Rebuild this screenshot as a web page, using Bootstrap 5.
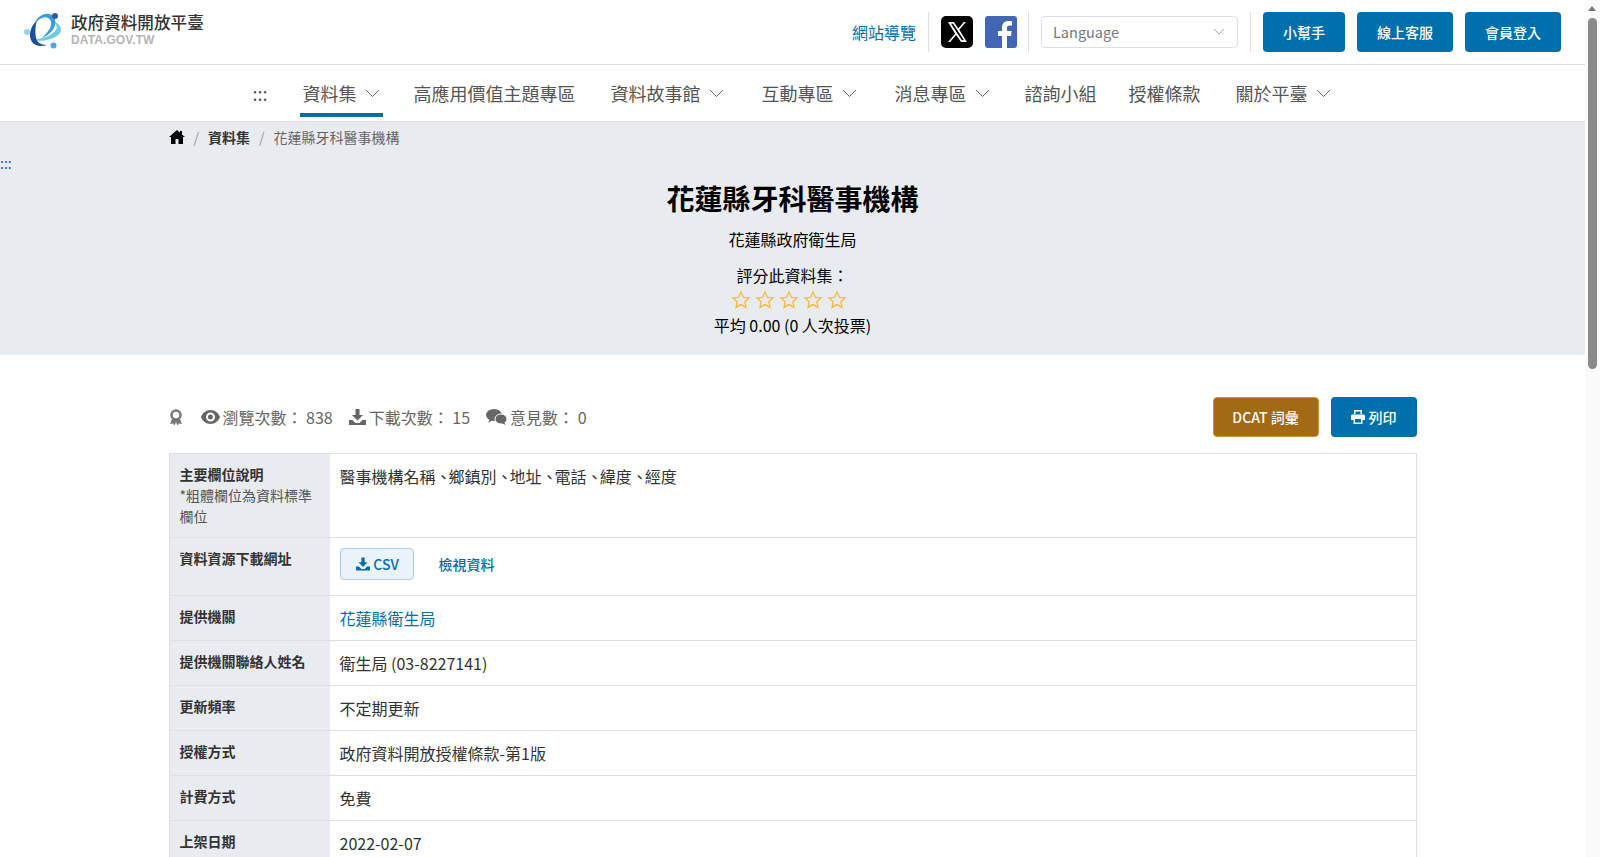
<!DOCTYPE html>
<html lang="zh-Hant">
<head>
  <meta charset="UTF-8" />
  <meta name="viewport" content="width=device-width, initial-scale=1.0"/>
  <title>花蓮縣牙科醫事機構</title>
  <link href="https://cdn.jsdelivr.net/npm/bootstrap@5.3.0/dist/css/bootstrap.min.css" rel="stylesheet">
  <style>
    html { overflow-x: hidden; }
    body {
      font-family: "Noto Sans CJK TC", "Noto Sans", sans-serif;
      font-size: 16px;
      color: #333;
      background: #fff;
      padding-right: 15px;
    }
    .fake-track { position: fixed; top: 0; right: 0; bottom: 0; width: 15px; background: #fafafa; }
    .fake-arrow { position: absolute; top: 6px; left: 3px; border: 4.5px solid transparent; border-top: 0; border-bottom: 5px solid #777; }
    .fake-thumb { position: absolute; top: 18px; left: 3px; width: 9px; height: 351px; background: #8a8a8a; border-radius: 5px; }
    .topbar { height: 65px; border-bottom: 1px solid #dcdfe8; padding: 12px 24px 0 23px; }
    .logo-text { margin-left: 6px; }
    .logo-name { font-size: 16.6px; line-height: 20px; color: #333; font-weight: 500; }
    .logo-sub { font-family: "Liberation Sans", sans-serif; font-size: 12px; line-height: 12px; font-weight: 700; color: #b5b5b5; letter-spacing: .1px; margin-top: 2px; }
    .top-tools { gap: 12px; height: 40px; }
    .sitemap-link { color: #0070ad; text-decoration: none; font-size: 16px; }
    .vline { width: 1px; height: 40px; background: #dcdfe8; }
    .fb-logo { margin-right: -1px; }
    .lang-pick { width: 197px; height: 32px; border: 1px solid #dcdfe8; border-radius: 4px; color: #777; font-size: 14.5px; padding: 0 12px 0 11px; }
    .blue-btn { background: #0070ad; color: #fff; border: 0; border-radius: 4px; font-size: 14px; height: 40px; font-weight: 500; }
    .blue-btn:hover { background: #005f93; color: #fff; }
    .mainnav { height: 57px; border-bottom: 1px solid #dcdfe8; padding-right: 2px; }
    .mainnav a { color: #555; text-decoration: none; font-size: 18px; height: 52px; padding-top: 8px; border-bottom: 4px solid transparent; display: flex; align-items: center; gap: 8px; white-space: nowrap; }
    .mainnav a.on { border-bottom-color: #0070ad; padding-left: 3px; padding-right: 3px; }
    .hero { background: #e8ebf0; height: 233px; position: relative; color: #000; }
    .crumbs { width: 1248px; margin: 0 auto; height: 31px; font-size: 14px; color: #666; padding-bottom: 1px; gap: 9px; }
    .crumbs b { color: #333; }
    .crumbs i { font-style: normal; color: #999; }
    .skip-mark { position: absolute; left: 0; top: 31px; color: #0070ad; font-size: 14px; line-height: 20px; }
    .hero h1 { font-size: 28px; font-weight: 700; line-height: 40px; margin: 0; padding-top: 25px; color: #000; }
    .hero-org { font-size: 16px; line-height: 24px; margin-top: 9px; }
    .hero-rate { font-size: 16px; line-height: 24px; margin-top: 12px; }
    .stars { height: 24px; gap: 4px; margin-top: 1px; margin-bottom: 1px; padding-right: 8px; }
    .hero-avg { font-size: 16px; line-height: 24px; }
    .page-wrap { width: 1248px; margin: 0 auto; padding-bottom: 40px; }
    .stat-row { padding-top: 42px; height: 98px; color: #666; font-size: 16px; }
    .stat-list { height: 40px; gap: 16px; }
    .stat-award { margin-right: 2px; }
    .stat-item { gap: 3px; }
    .gold-btn { background: #a26a15; border: 1px solid #d9952f; color: #fff; border-radius: 4px; height: 40px; width: 106px; font-size: 14px; font-weight: 500; }
    .gold-btn:hover { background: #8d5c12; color: #fff; }
    .info-tbl { border: 1px solid #dcdfe8; width: 100%; }
    .info-line { display: flex; border-bottom: 1px solid #dcdfe8; }
    .info-head { width: 160px; flex: none; background: #e8ebf0; padding: 10px; font-size: 14px; line-height: 21px; color: #555; }
    .info-head b { font-weight: 700; color: #333; }
    .info-val { padding: 10px; font-size: 16px; line-height: 24px; flex: 1; color: #333; }
    .info-val a { color: #0070ad; text-decoration: none; }
    .dun { letter-spacing: -3px; }
    .csv-btn { background: #eaf3fb; border: 1px solid #a9cdea; border-radius: 4px; height: 32px; width: 74px; font-size: 14px; font-weight: 500; gap: 3px; padding-left: 2px; }
    .view-link { font-size: 14px; font-weight: 500; margin-left: 25px; }
  </style>
</head>
<body>
  <header class="topbar d-flex justify-content-between">
    <div class="d-flex align-items-start">
      <svg width="42" height="38" viewBox="0 0 42 38">
        <path d="M7 27c9 4 25 1 30-6 3-5-1-10-7-12 4 4 5 7 2 10-5 6-17 9-25 8z" fill="#6fcbe8"/>
        <path d="M14 8C7 15 5 24 9 30c3 4 9 5 15 3-7 0-10-3-11-7-1-5-1-11 1-18z" fill="#1d4f9f"/>
        <path d="M11 13c2-7 9-12 15-11 5 1 7 6 6 11-1 5-6 10-13 13 6-6 10-11 9-16-1-4-5-6-9-4-3 1-6 4-8 7z" fill="#3b9bd8"/>
        <circle cx="32" cy="4" r="3" fill="#2a5cae"/>
        <circle cx="4" cy="20" r="3" fill="#8fd5ef"/>
        <circle cx="30.500" cy="33.500" r="3" fill="#4aa8dc"/>
      </svg>
      <div class="logo-text">
        <div class="logo-name">政府資料開放平臺</div>
        <div class="logo-sub">DATA.GOV.TW</div>
      </div>
    </div>
    <div class="top-tools d-flex align-items-center">
      <a class="sitemap-link" href="#">網站導覽</a>
      <span class="vline"></span>
      <svg width="32" height="32" viewBox="0 0 32 32"><rect width="32" height="32" rx="5" fill="#000"/><path transform="translate(1.600 1.600) scale(.9)" d="M6 5h6.500l5 7 6-7h2.400l-7.300 8.500L27 27h-6.500l-5.500-7.700L8.400 27H6l7.900-9.100L6 5zm3.400 1.700L21.400 25.300h2.300L11.700 6.700H9.400z" fill="#fff"/></svg>
      <svg class="fb-logo" width="32" height="32" viewBox="0 0 32 32"><rect width="32" height="32" rx="3" fill="#4267b2"/><path d="M22 32V20h4l.7-5H22v-3c0-1.500.5-2.500 2.600-2.500H27V5.200C26.500 5.100 25 5 23.500 5 20 5 17 7.100 17 11.400V15h-4v5h4v12z" fill="#fff"/></svg>
      <span class="vline"></span>
      <div class="lang-pick d-flex align-items-center justify-content-between">
        <span>Language</span>
        <svg width="12" height="8" viewBox="0 0 12 8"><path d="M1 1l5 5 5-5" fill="none" stroke="#aaa" stroke-width="1"/></svg>
      </div>
      <span class="vline"></span>
      <button class="btn blue-btn px-0" style="width:82px">小幫手</button>
      <button class="btn blue-btn px-0" style="width:96px">線上客服</button>
      <button class="btn blue-btn px-0" style="width:96px">會員登入</button>
    </div>
  </header>

  <nav class="mainnav d-flex justify-content-center align-items-start">
    <a href="#" style="margin-right:32px">:::</a>
    <a class="on" href="#">資料集 <svg width="15" height="9" viewBox="0 0 15 9"><path d="M1 1l6.500 6.500L14 1" fill="none" stroke="#666"/></svg></a>
    <a href="#" style="margin-left:31px">高應用價值主題專區</a>
    <a href="#" style="margin-left:35px">資料故事館 <svg width="15" height="9" viewBox="0 0 15 9"><path d="M1 1l6.500 6.500L14 1" fill="none" stroke="#666"/></svg></a>
    <a href="#" style="margin-left:38px">互動專區 <svg width="15" height="9" viewBox="0 0 15 9"><path d="M1 1l6.500 6.500L14 1" fill="none" stroke="#666"/></svg></a>
    <a href="#" style="margin-left:38px">消息專區 <svg width="15" height="9" viewBox="0 0 15 9"><path d="M1 1l6.500 6.500L14 1" fill="none" stroke="#666"/></svg></a>
    <a href="#" style="margin-left:35px">諮詢小組</a>
    <a href="#" style="margin-left:32px">授權條款</a>
    <a href="#" style="margin-left:35px">關於平臺 <svg width="15" height="9" viewBox="0 0 15 9"><path d="M1 1l6.500 6.500L14 1" fill="none" stroke="#666"/></svg></a>
  </nav>

  <section class="hero text-center">
    <div class="crumbs d-flex align-items-center text-start">
      <svg width="16" height="14" viewBox="0 0 16 14"><path d="M8 0L0 7h2v7h4.500V9h3v5H14V7h2L13 4.400V1h-2v1.700z" fill="#000"/></svg>
      <i>/</i><b>資料集</b><i>/</i><span>花蓮縣牙科醫事機構</span>
    </div>
    <a class="skip-mark text-decoration-none" href="#">:::</a>
    <h1>花蓮縣牙科醫事機構</h1>
    <div class="hero-org">花蓮縣政府衛生局</div>
    <div class="hero-rate">評分此資料集：</div>
    <div class="stars d-flex justify-content-center align-items-center">
      <svg width="20" height="20" viewBox="0 0 24 24"><path d="M12 2.500l2.900 6.200 6.800.8-5 4.700 1.300 6.700-6-3.400-6 3.400 1.300-6.700-5-4.700 6.800-.8z" fill="none" stroke="#f5b82e" stroke-width="1.500"/></svg>
      <svg width="20" height="20" viewBox="0 0 24 24"><path d="M12 2.500l2.900 6.200 6.800.8-5 4.700 1.300 6.700-6-3.400-6 3.400 1.300-6.700-5-4.700 6.800-.8z" fill="none" stroke="#f5b82e" stroke-width="1.500"/></svg>
      <svg width="20" height="20" viewBox="0 0 24 24"><path d="M12 2.500l2.900 6.200 6.800.8-5 4.700 1.300 6.700-6-3.400-6 3.400 1.300-6.700-5-4.700 6.800-.8z" fill="none" stroke="#f5b82e" stroke-width="1.500"/></svg>
      <svg width="20" height="20" viewBox="0 0 24 24"><path d="M12 2.500l2.900 6.200 6.800.8-5 4.700 1.300 6.700-6-3.400-6 3.400 1.300-6.700-5-4.700 6.800-.8z" fill="none" stroke="#f5b82e" stroke-width="1.500"/></svg>
      <svg width="20" height="20" viewBox="0 0 24 24"><path d="M12 2.500l2.900 6.200 6.800.8-5 4.700 1.300 6.700-6-3.400-6 3.400 1.300-6.700-5-4.700 6.800-.8z" fill="none" stroke="#f5b82e" stroke-width="1.500"/></svg>
    </div>
    <div class="hero-avg">平均 0.00 (0 人次投票)</div>
  </section>

  <main class="page-wrap">
    <div class="stat-row d-flex justify-content-between align-items-start">
      <div class="stat-list d-flex align-items-center">
        <svg class="stat-award flex-shrink-0" width="14" height="17" viewBox="0 0 14 17"><circle cx="7" cy="6" r="4.500" fill="none" stroke="#777" stroke-width="2.500"/><path d="M3 10l-2 5 3-.5 1.500 2L7 13l1.500 3.500 1.500-2 3 .5-2-5z" fill="#777"/></svg>
        <span class="stat-item d-flex align-items-center">
          <svg width="19" height="14" viewBox="0 0 19 14"><path d="M9.500 0C5 0 1.500 3 0 7c1.500 4 5 7 9.500 7S17.500 11 19 7c-1.500-4-5-7-9.500-7zm0 11.500a4.500 4.500 0 110-9 4.500 4.500 0 010 9zm0-7a2.500 2.500 0 100 5 2.500 2.500 0 000-5z" fill="#666"/></svg>
          瀏覽次數： 838
        </span>
        <span class="stat-item d-flex align-items-center">
          <svg width="17" height="16" viewBox="0 0 17 16"><path d="M6.500 0h4v6H14l-5.500 5.500L3 6h3.500zM0 11h3.500l3 3h4l3-3H17v5H0z" fill="#666"/></svg>
          下載次數： 15
        </span>
        <span class="stat-item d-flex align-items-center">
          <svg width="21" height="16" viewBox="0 0 21 16"><ellipse cx="8" cy="6" rx="8" ry="6" fill="#666"/><path d="M2 14l2-4 3 1z" fill="#666"/><ellipse cx="15" cy="10" rx="6" ry="5" fill="#666" stroke="#fff"/><path d="M20 16l-2-3-3 1z" fill="#666"/></svg>
          意見數： 0
        </span>
      </div>
      <div class="d-flex gap-2">
        <button class="btn gold-btn p-0 me-1">DCAT 詞彙</button>
        <button class="btn blue-btn p-0 d-flex align-items-center justify-content-center gap-1" style="width:86px">
          <svg width="14" height="14" viewBox="0 0 14 14"><path d="M3 0h8v4h-1.500V1.500h-5V4H3zM1.500 4.500h11c.8 0 1.500.7 1.500 1.500v4h-2.500v4h-9v-4H0V6c0-.8.7-1.500 1.500-1.500zM4 9v3.500h6V9z" fill="#fff"/></svg>
          列印
        </button>
      </div>
    </div>

    <div class="info-tbl">
      <div class="info-line" style="height:84px">
        <div class="info-head"><b>主要欄位說明</b><br>*粗體欄位為資料標準欄位</div>
        <div class="info-val">醫事機構名稱<span class="dun">、</span>鄉鎮別<span class="dun">、</span>地址<span class="dun">、</span>電話<span class="dun">、</span>緯度<span class="dun">、</span>經度</div>
      </div>
      <div class="info-line" style="height:58px">
        <div class="info-head"><b>資料資源下載網址</b></div>
        <div class="info-val d-flex align-items-start">
          <a class="csv-btn d-flex align-items-center justify-content-center" href="#">
            <svg width="14" height="14" viewBox="0 0 17 16"><path d="M6.500 0h4v6H14l-5.500 5.500L3 6h3.500zM0 11h3.500l3 3h4l3-3H17v5H0z" fill="#0070ad"/></svg>
            CSV
          </a>
          <a class="view-link mt-1" href="#">檢視資料</a>
        </div>
      </div>
      <div class="info-line" style="height:45px"><div class="info-head"><b>提供機關</b></div><div class="info-val"><a href="#">花蓮縣衛生局</a></div></div>
      <div class="info-line" style="height:45px"><div class="info-head"><b>提供機關聯絡人姓名</b></div><div class="info-val">衛生局 (03-8227141)</div></div>
      <div class="info-line" style="height:45px"><div class="info-head"><b>更新頻率</b></div><div class="info-val">不定期更新</div></div>
      <div class="info-line" style="height:45px"><div class="info-head"><b>授權方式</b></div><div class="info-val">政府資料開放授權條款-第1版</div></div>
      <div class="info-line" style="height:45px"><div class="info-head"><b>計費方式</b></div><div class="info-val">免費</div></div>
      <div class="info-line" style="height:45px"><div class="info-head"><b>上架日期</b></div><div class="info-val">2022-02-07</div></div>
    </div>
  </main>

  <div class="fake-track" aria-hidden="true"><span class="fake-arrow"></span><span class="fake-thumb"></span></div>

  <script src="https://cdn.jsdelivr.net/npm/bootstrap@5.3.0/dist/js/bootstrap.bundle.min.js"></script>
</body>
</html>
